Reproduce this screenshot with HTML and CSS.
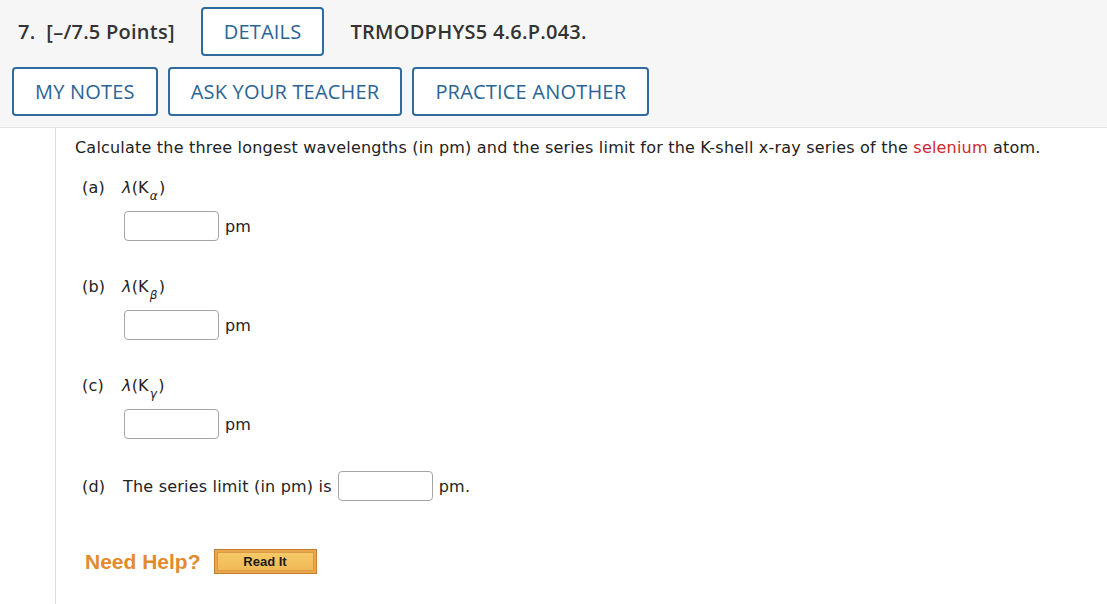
FILE: index.html
```html
<!DOCTYPE html>
<html>
<head>
<meta charset="utf-8">
<link rel="stylesheet" href="styles.css">
</head>
<body class="page">
<div class="header">
  <div class="row row-top">
    <span class="qnum">7.&nbsp;&nbsp;[–/7.5 Points]</span>
    <button class="btn">DETAILS</button>
    <span class="qcode">TRMODPHYS5 4.6.P.043.</span>
  </div>
  <div class="row row-buttons">
    <button class="btn">MY NOTES</button>
    <button class="btn">ASK YOUR TEACHER</button>
    <button class="btn">PRACTICE ANOTHER</button>
  </div>
</div>
<div class="content">
  <p class="intro">Calculate the three longest wavelengths (in pm) and the series limit for the K-shell x-ray series of the <span class="hl">selenium</span> atom.</p>

  <div class="part">
    <div class="plabel"><span class="pl">(a)</span><span class="math"><i class="lam">λ</i>(K<sub class="sb">α</sub>)</span></div>
    <div class="answer"><span class="box"></span><span class="unit">pm</span></div>
  </div>
  <div class="part">
    <div class="plabel"><span class="pl">(b)</span><span class="math"><i class="lam">λ</i>(K<sub class="sb">β</sub>)</span></div>
    <div class="answer"><span class="box"></span><span class="unit">pm</span></div>
  </div>
  <div class="part">
    <div class="plabel"><span class="pl">(c)</span><span class="math"><i class="lam">λ</i>(K<sub class="sb">γ</sub>)</span></div>
    <div class="answer"><span class="box"></span><span class="unit">pm</span></div>
  </div>
  <div class="part-d">
    <span class="pl">(d)</span><span class="dtext">The series limit (in pm) is</span><span class="box"></span><span class="unit">pm.</span>
  </div>

  <div class="help">
    <span class="need">Need Help?</span>
    <span class="readit"><span class="readit-inner">Read It</span></span>
  </div>
</div>
</body>
</html>
```
FILE: styles.css
```css
.page {
  margin: 0;
  background: #fff;
  font-family: "DejaVu Sans", sans-serif;
  color: #222;
}
.header {
  background: #f6f6f6;
  border-bottom: 1px solid #e3e3e3;
  padding: 7px 0 11px 12px;
}
.row {
  display: flex;
  align-items: center;
}
.row-top {
  gap: 26px;
}
.row-buttons {
  gap: 10px;
  margin-top: 11px;
}
.qnum, .qcode {
  font-family: "Open Sans", sans-serif;
  font-weight: 600;
  font-size: 20px;
  letter-spacing: 0.25px;
  color: #333;
}
.qnum {
  margin-left: 6px;
}
.btn {
  font-family: "Open Sans", sans-serif;
  font-size: 20px;
  font-weight: 500;
  letter-spacing: 0.2px;
  color: #2a6496;
  background: #fff;
  border: 2px solid #2f6b9f;
  border-radius: 4px;
  height: 49px;
  padding: 0 21px;
  margin: 0;
  line-height: 1;
}
.content {
  margin-left: 55px;
  border-left: 1px solid #dcdcdc;
  padding: 11px 0 30px 19px;
  font-family: "DejaVu Sans", sans-serif;
  font-size: 16px;
  letter-spacing: 0.2px;
  color: #222;
}
.intro {
  margin: 0;
  line-height: 18px;
}
.hl {
  color: #d0282b;
}
.part {
  margin-left: 7px;
  margin-top: 37px;
}
.intro + .part {
  margin-top: 22px;
}
.plabel {
  display: flex;
  align-items: baseline;
  line-height: 18px;
}
.pl {
  width: 40px;
}
.lam {
  font-style: italic;
}
.sb {
  font-size: 12px;
  font-style: italic;
  vertical-align: -7px;
  line-height: 0;
  padding: 0 1px;
}
.answer {
  display: flex;
  align-items: center;
  margin-left: 42px;
  margin-top: 14px;
  gap: 6px;
}
.box {
  display: inline-block;
  width: 93px;
  height: 28px;
  border: 1px solid #a5a5a5;
  border-radius: 4px;
  background: #fff;
}
.part-d {
  display: flex;
  align-items: center;
  margin-left: 7px;
  margin-top: 32px;
  gap: 6px;
}
.part-d .pl {
  width: 35px;
}
.help {
  display: flex;
  align-items: center;
  margin-left: 10px;
  margin-top: 48px;
  gap: 13px;
  letter-spacing: 0;
}
.need {
  font-family: "Liberation Sans", Arial, sans-serif;
  font-weight: bold;
  font-size: 21px;
  color: #e38b2c;
}
.readit {
  display: inline-block;
  border: 1px solid #c47f35;
  background: #e9a64b;
  padding: 2px;
}
.readit-inner {
  display: block;
  width: 95px;
  height: 17px;
  line-height: 17px;
  text-align: center;
  background: linear-gradient(#f7c968, #f1b957);
  border: 1px solid #d99b45;
  font-family: "Liberation Sans", Arial, sans-serif;
  font-weight: bold;
  font-size: 13px;
  color: #1a1a1a;
}
```
